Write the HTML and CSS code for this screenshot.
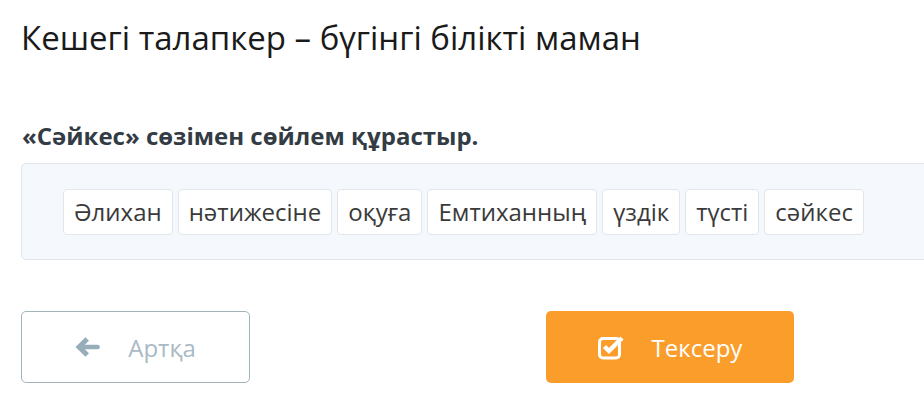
FILE: index.html
```html
<!DOCTYPE html>
<html lang="kk">
  <head>
    <meta charset="utf-8" />
    <link rel="stylesheet" href="styles.css">
  </head>
  <body>
    <div class="page">
      <h1 class="title">Кешегі талапкер – бүгінгі білікті маман</h1>

      <p class="question">«Сәйкес» сөзімен сөйлем құрастыр.</p>

      <!-- Сөздер -->
      <div class="words">
        <span class="word">Әлихан</span>
        <span class="word">нәтижесіне</span>
        <span class="word">оқуға</span>
        <span class="word">Емтиханның</span>
        <span class="word">үздік</span>
        <span class="word">түсті</span>
        <span class="word">сәйкес</span>
      </div>

      <div class="actions">
        <button class="btn btn-back">
          <svg class="icon" width="25" height="22" viewBox="0 0 25 22">
            <path d="M0.5 11 L10.5 1.2 L14 4.7 L9.8 8.8 L23 8.8 Q24.8 8.8 24.8 11 Q24.8 13.2 23 13.2 L9.8 13.2 L14 17.3 L10.5 20.8 Z" fill="#97adba"/>
          </svg>
          <span>Артқа</span>
        </button>
        <button class="btn btn-check">
          <svg class="icon" width="26" height="26" viewBox="0 0 26 26">
            <rect x="1.5" y="4.5" width="20" height="19.5" rx="3.5" fill="none" stroke="#fff" stroke-width="3"/>
            <path d="M6.5 12.5 L11 17 L24 4" fill="none" stroke="#fff" stroke-width="4.4"/>
          </svg>
          <span>Тексеру</span>
        </button>
      </div>
    </div>
  </body>
</html>
```

FILE: styles.css
```css
body {
  margin: 0;
  font-family: "Open Sans", "DejaVu Sans", sans-serif;
  background: #fff;
  overflow: hidden;
}

.page {
  padding: 14px 0 0 21px;
  width: 980px;
}

.title {
  margin: 0;
  font-size: 33px;
  font-weight: 400;
  line-height: 48px;
  color: #1a1a1a;
}

.question {
  margin: 58px 0 0 1px;
  font-size: 24px;
  font-weight: 700;
  line-height: 32px;
  color: #333b44;
}

.words {
  margin-top: 11px;
  display: flex;
  gap: 5px;
  padding: 25px 41px 24px;
  background: #f5f9fd;
  border: 1px solid #dfe5ea;
  border-radius: 5px;
}

.word {
  padding: 0 10px;
  height: 44px;
  line-height: 44px;
  font-size: 24px;
  color: #3a3a3a;
  background: #fff;
  border: 1px solid #e2e6ea;
  border-radius: 4px;
}

.actions {
  margin-top: 51px;
  display: flex;
  gap: 296px;
}

.btn {
  display: flex;
  align-items: center;
  justify-content: center;
  gap: 28px;
  height: 72px;
  border-radius: 5px;
  font-family: "Open Sans", "DejaVu Sans", sans-serif;
  font-size: 24px;
  padding: 0;
}

.btn-back {
  width: 229px;
  background: #fff;
  border: 1px solid #a3b3bd;
  color: #a9bac6;
}

.btn-check {
  width: 248px;
  background: #fb9d2b;
  border: none;
  color: #fff;
}
```
